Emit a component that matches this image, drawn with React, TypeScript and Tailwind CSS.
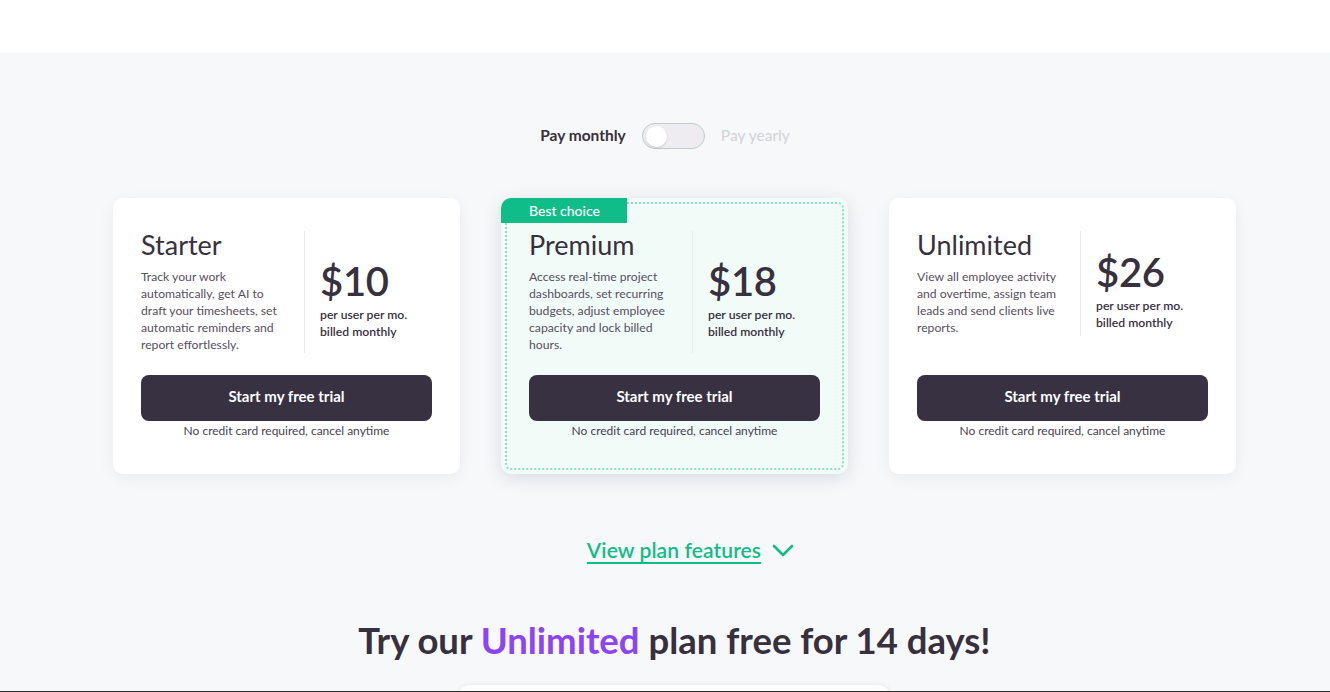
import React from "react";

const plans = [
  {
    name: "Starter",
    desc: "Track your work automatically, get AI to draft your timesheets, set automatic reminders and report effortlessly.",
    price: "$10",
    best: false,
  },
  {
    name: "Premium",
    desc: "Access real-time project dashboards, set recurring budgets, adjust employee capacity and lock billed hours.",
    price: "$18",
    best: true,
  },
  {
    name: "Unlimited",
    desc: "View all employee activity and overtime, assign team leads and send clients live reports.",
    price: "$26",
    best: false,
  },
];

function Card({ p }: { p: (typeof plans)[number] }) {
  return (
    <div
      className={
        "relative w-[347px] h-[276px] rounded-[10px] flex flex-col " +
        (p.best ? "bg-[#f1fbf8] shadow-[0_4px_18px_rgba(40,40,70,0.14)]" : "bg-white shadow-[0_4px_16px_rgba(40,40,70,0.06)]")
      }
    >
      {p.best && (
        <>
          <div className="absolute inset-[4px] rounded-[6px] border-2 border-dotted border-[#8fe0c2] pointer-events-none" />
          <div className="absolute left-0 top-0 w-[126px] h-[25px] bg-[#10bd88] rounded-tl-[10px] text-white text-[14px] leading-[25px] pl-[28px] font-medium">
            Best choice
          </div>
        </>
      )}
      <div className="relative flex-1 flex flex-col px-[28px] pt-[33px] pb-[34px]">
        <div className="flex items-center">
          <div className="w-[163px] pr-[13px]">
            <div className="text-[27px] leading-[28px] text-[#37303f]">{p.name}</div>
            <p className="mt-[9px] text-[12.2px] leading-[17px] text-[#57505e]">{p.desc}</p>
          </div>
          <div className="self-stretch border-l border-[#ebe9ee]" />
          <div className="pl-[15px] pt-[14px] flex flex-col justify-center">
            <div className="text-[40px] leading-[44px] font-semibold text-[#37303f] tracking-[-0.3px]">{p.price}</div>
            <div className="mt-[3px] text-[12.2px] leading-[17px] font-semibold text-[#37303f]">
              per user per mo.
              <br />
              billed monthly
            </div>
          </div>
        </div>
        <button className="mt-auto w-full h-[46px] pb-[3px] rounded-[8px] bg-[#383142] text-white text-[15px] font-bold">
          Start my free trial
        </button>
        <div className="mt-[1px] text-center text-[12px] leading-[18px] text-[#48424f]">No credit card required, cancel anytime</div>
      </div>
    </div>
  );
}

export default function App() {
  return (
    <div className="w-[1330px] h-[692px] overflow-hidden bg-[#f7f8fa] relative" style={{ fontFamily: "Lato, 'Noto Sans', sans-serif" }}>
      <div className="h-[53px] bg-white" />
      <div className="flex items-center justify-center mt-[70px] h-[26px]">
        <span className="text-[15.5px] font-bold text-[#37303f] mr-[16px]">Pay monthly</span>
        <div className="w-[63px] h-[26px] rounded-full bg-[#eeecf0] border border-[#b8cfcb] relative">
          <div className="absolute left-[3px] top-[2px] w-[21px] h-[21px] rounded-full bg-white shadow-[0_1px_2px_rgba(0,0,0,0.15)]" />
        </div>
        <span className="text-[15.5px] font-medium text-[#d6d4da] ml-[16px]">Pay yearly</span>
      </div>
      <div className="flex justify-center gap-[41px] mt-[49px] pl-[19px]">
        {plans.map((p) => (
          <Card key={p.name} p={p} />
        ))}
      </div>
      <div className="flex justify-center items-center mt-[60px] gap-[11px] pl-[51px]">
        <a className="text-[21px] font-semibold text-[#10bd88] underline underline-offset-[4px] decoration-[2px] tracking-[0.1px]">View plan features</a>
        <svg width="22" height="14" viewBox="0 0 22 14" fill="none">
          <path d="M2 3l9 9 9-9" stroke="#10bd88" strokeWidth="2.6" strokeLinecap="round" strokeLinejoin="round" />
        </svg>
      </div>
      <h2 className="text-center mt-[50px] pl-[19px] text-[36.5px] font-bold text-[#37303f] leading-[48px]">
        Try our <span className="text-[#8b45f6]">Unlimited</span> plan free for 14 days!
      </h2>
      <div className="absolute left-[458px] top-[685px] w-[432px] h-[20px] rounded-t-[12px] bg-white shadow-[0_0_6px_rgba(0,0,0,0.08)]" />
      <div className="absolute left-0 bottom-0 w-full h-[1px] bg-[#2a2a2a]" />
    </div>
  );
}
